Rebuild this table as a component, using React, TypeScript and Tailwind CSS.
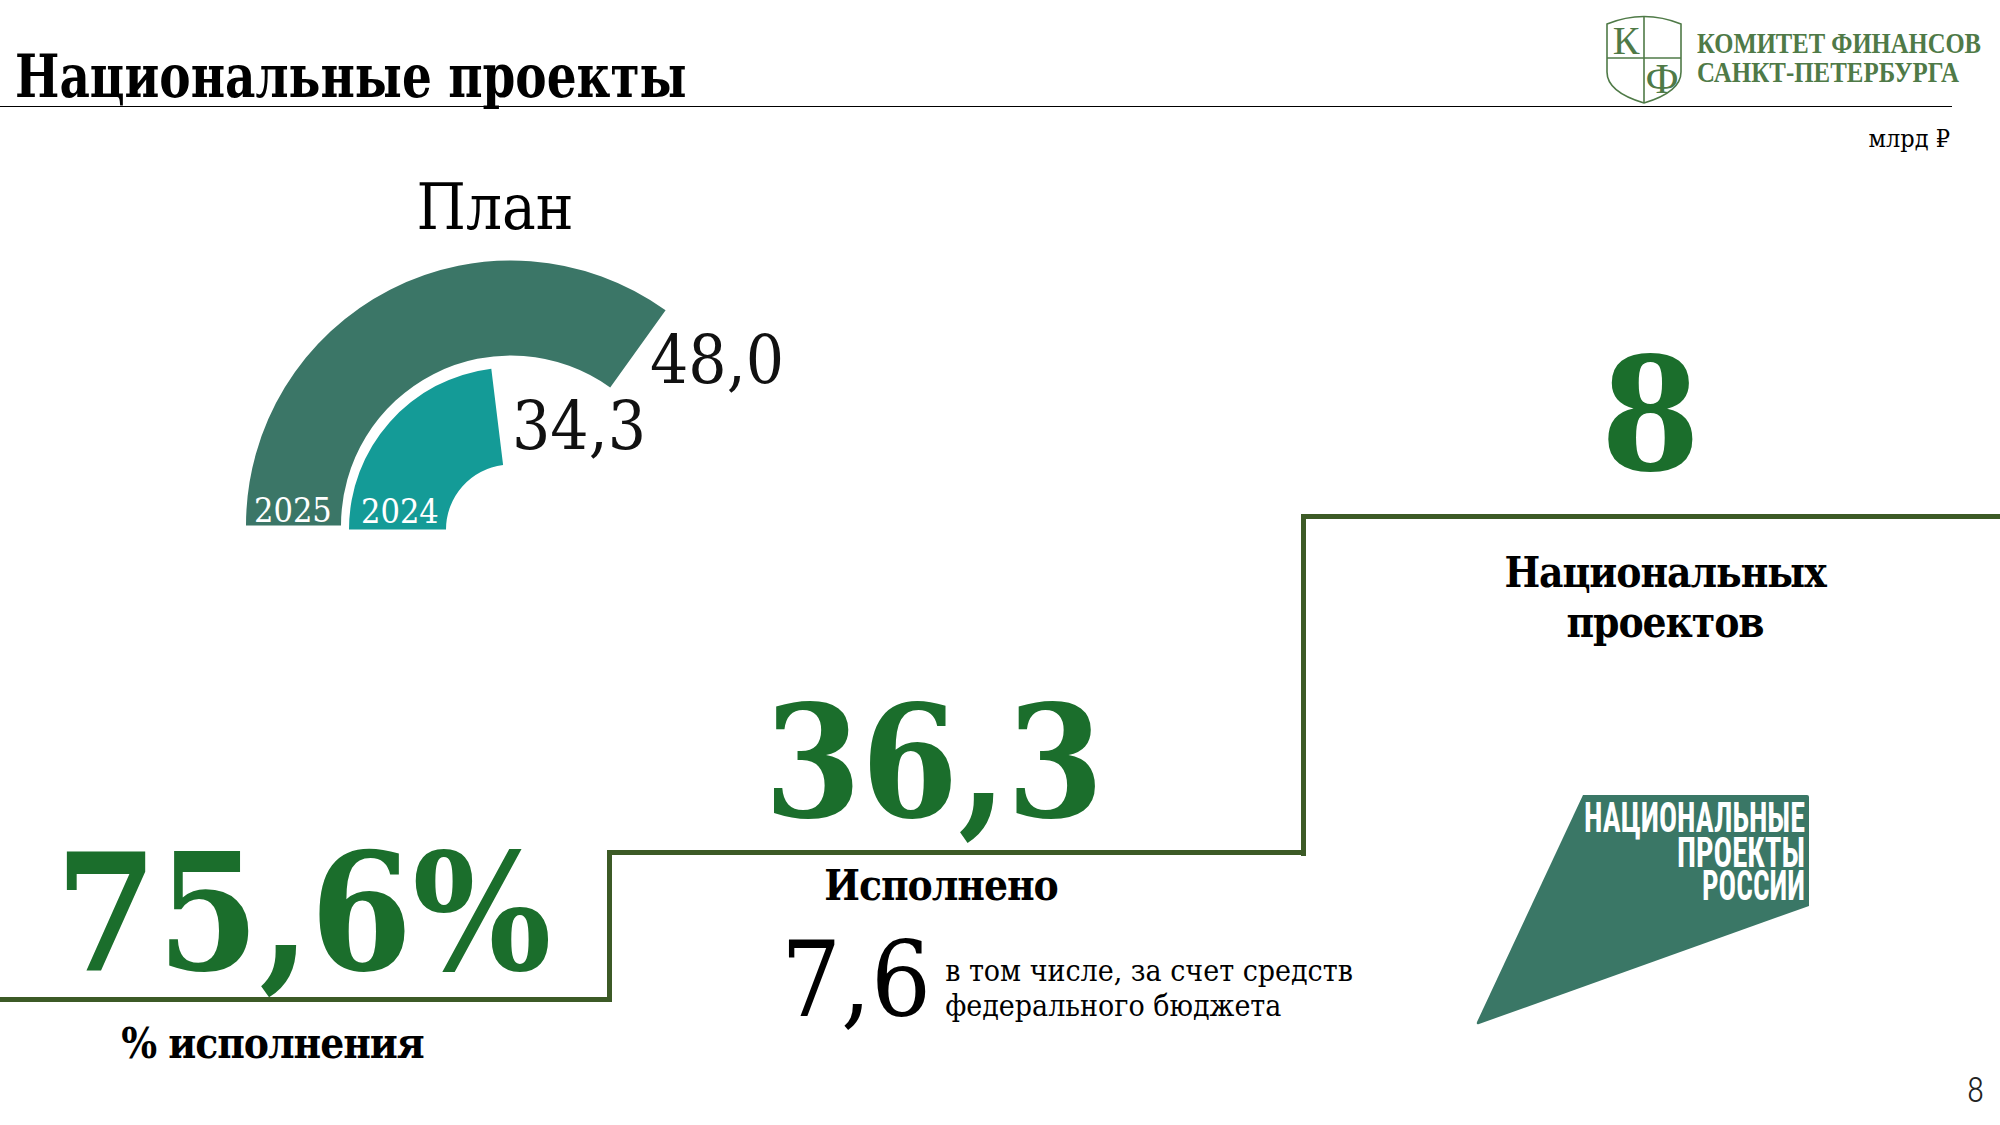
import React from 'react';

// slab serif used across the slide
const SERIF = "font-['DejaVu_Serif_Condensed','DejaVu_Serif',serif] font-stretch-semi-condensed";
const GREEN = 'text-[#1b6e2c]';

const CommitteeLogo: React.FC = () => (
  <svg width="379" height="93" viewBox="0 0 379 93" className="block">
    <g fill="none" stroke="#4f7a47" strokeWidth="1.6">
      <path d="M1 12 Q38 -3 75 12 L75 60 Q75 80 38 91 Q1 80 1 60 Z" />
      <line x1="38" y1="4.5" x2="38" y2="91" />
      <line x1="1" y1="46" x2="75" y2="46" />
    </g>
    <g fontFamily="'Liberation Serif', serif" fill="#4f7a47">
      <text x="20" y="42" fontSize="40" textAnchor="middle">К</text>
      <text x="56" y="81" fontSize="42" textAnchor="middle">Ф</text>
      <text x="91" y="41" fontSize="29" fontWeight="700" textLength="284" lengthAdjust="spacingAndGlyphs">
        КОМИТЕТ ФИНАНСОВ
      </text>
      <text x="91" y="70" fontSize="29" fontWeight="700" textLength="262" lengthAdjust="spacingAndGlyphs">
        САНКТ-ПЕТЕРБУРГА
      </text>
    </g>
  </svg>
);

const PlanGauge: React.FC = () => (
  <svg width="560" height="290" viewBox="0 0 560 290" className={`block ${SERIF}`}>
    {/* 2025 band */}
    <path d="M6 275.5 A265 265 0 0 1 425.6 60.3 L370.2 137.4 A170 170 0 0 0 101 275.5 Z" fill="#3b7667" />
    {/* 2024 band */}
    <path d="M109 279.5 A162 162 0 0 1 251.3 118.7 L263.1 215 A65 65 0 0 0 206 279.5 Z" fill="#149b97" />
    <text x="14" y="272" fontSize="34" fill="#fff">2025</text>
    <text x="121" y="273" fontSize="34" fill="#fff">2024</text>
    <text x="410" y="133" fontSize="67" fill="#111">48,0</text>
    <text x="272" y="199" fontSize="67" fill="#111">34,3</text>
  </svg>
);

const NationalProjectsLogo: React.FC = () => (
  <svg width="333" height="231" viewBox="0 0 333 231" className="block">
    <path d="M107 1 L331 1 Q333 1 333 3 L333 112 L3 230 Q0 231 1 228 Z" fill="#3a7766" />
    <g fontFamily="Roboto, 'Liberation Sans', sans-serif" fontWeight="700" fontSize="42" fill="#fff" textAnchor="end">
      <text x="329" y="38" textLength="221" lengthAdjust="spacingAndGlyphs">НАЦИОНАЛЬНЫЕ</text>
      <text x="329" y="73" textLength="128" lengthAdjust="spacingAndGlyphs">ПРОЕКТЫ</text>
      <text x="329" y="106" textLength="103" lengthAdjust="spacingAndGlyphs">РОССИИ</text>
    </g>
  </svg>
);

export default function App() {
  return (
    <div className={`relative w-[2000px] h-[1125px] overflow-hidden bg-white text-black ${SERIF}`}>
      {/* Header */}
      <header className="flex justify-between w-[1952px] h-[107px] border-b-[1.5px] border-black">
        <h1 className="self-end pl-[15px] text-[60px] leading-none font-bold whitespace-nowrap">
          <span className="inline-block origin-left scale-x-[0.87]">Национальные проекты</span>
        </h1>
        <div className="self-start pt-[12px] -mr-[33px]">
          <CommitteeLogo />
        </div>
      </header>

      <div className="flex h-[1018px]">
        {/* Left: plan gauge + two steps */}
        <div className="w-[1301px] flex flex-col">
          <div className="h-[433px] shrink-0 flex flex-col pl-[240px]">
            <p className="mt-[69px] w-[510px] text-center text-[63px] leading-none">План</p>
            <div className="mt-[11px]">
              <PlanGauge />
            </div>
          </div>

          <div className="flex">
            <div className="w-[607px] flex flex-col">
              <div className="h-[462px] shrink-0 flex items-end justify-center pb-[3px] border-b-[5px] border-[#3c5a26]">
                <span className={`text-[163px] leading-none font-bold ${GREEN}`}>75,6%</span>
              </div>
              <p className="mt-[21px] pr-[62px] text-center text-[42px] leading-none font-bold tracking-[-0.025em]">
                % исполнения
              </p>
            </div>

            <div className="w-[694px] flex flex-col">
              <div className="h-[310px] shrink-0 flex items-end justify-center pr-[40px] pb-[10px]">
                <span className={`text-[155px] leading-none font-bold ${GREEN}`}>36,3</span>
              </div>
              <div className="h-[152px] shrink-0 flex flex-col border-t-[5px] border-l-[5px] border-[#3c5a26]">
                <p className="shrink-0 mt-[10px] pr-[31px] text-center text-[42px] leading-none font-bold tracking-[-0.025em]">
                  Исполнено
                </p>
                <div className="shrink-0 mt-[21px] ml-[169px] flex items-start gap-[14px]">
                  <span className="text-[105px] leading-none">7,6</span>
                  <p className="mt-[25px] text-[30px] leading-[35px] whitespace-nowrap">
                    в том числе, за счет средств
                    <br />
                    федерального бюджета
                  </p>
                </div>
              </div>
            </div>
          </div>
        </div>

        {/* Right: number of projects */}
        <div className="w-[699px] flex flex-col">
          <p className="shrink-0 mt-[19px] pr-[50px] text-right text-[25px] leading-none">млрд ₽</p>
          <p className={`shrink-0 mt-[185.3px] text-center text-[158px] leading-none font-bold ${GREEN}`}>8</p>
          <div className="shrink-0 mt-[19.7px] h-[342px] flex flex-col border-t-[5px] border-l-[5px] border-[#3c5a26]">
            <p className="shrink-0 mt-[29px] pl-[24px] text-center text-[42px] leading-[50px] font-bold tracking-[-0.025em]">
              Национальных
              <br />
              проектов
            </p>
            <div className="shrink-0 mt-[146px] ml-[170px]">
              <NationalProjectsLogo />
            </div>
          </div>
        </div>
      </div>

      <span className="absolute right-[16px] top-[1073px] text-[35px] leading-none font-light text-[#222] font-['Roboto','Liberation_Sans',sans-serif]">
        8
      </span>
    </div>
  );
}
